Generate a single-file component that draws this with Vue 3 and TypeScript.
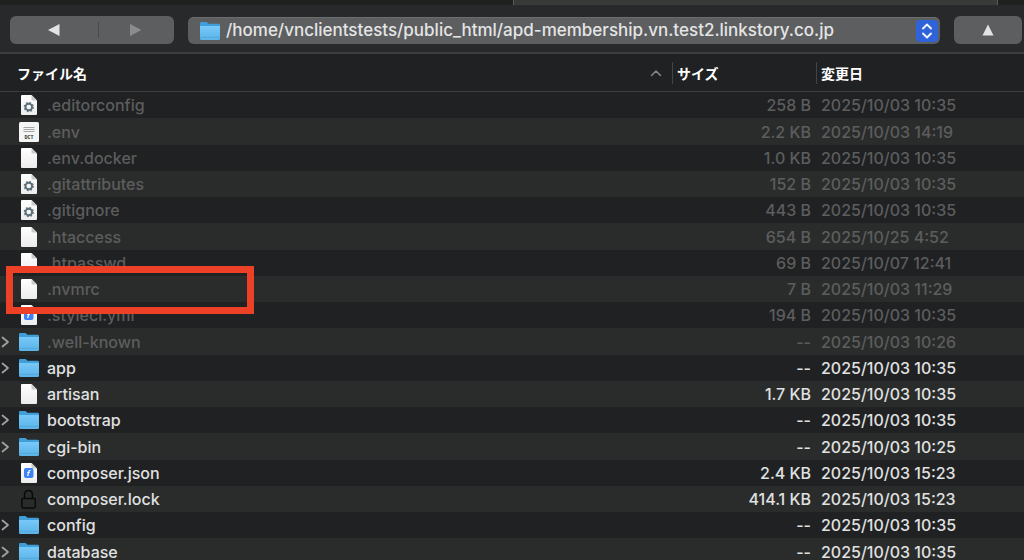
<script setup lang="ts">
import { ref } from 'vue'

type Kind = 'gear' | 'dict' | 'blank' | 'script' | 'lock' | 'folder'

interface Entry {
  name: string
  kind: Kind
  size: string
  date: string
  hidden?: boolean
  marked?: boolean
}

const path = ref('/home/vnclientstests/public_html/apd-membership.vn.test2.linkstory.co.jp')

const entries: Entry[] = [
  { name: '.editorconfig', kind: 'gear', size: '258 B', date: '2025/10/03 10:35', hidden: true },
  { name: '.env', kind: 'dict', size: '2.2 KB', date: '2025/10/03 14:19', hidden: true },
  { name: '.env.docker', kind: 'blank', size: '1.0 KB', date: '2025/10/03 10:35', hidden: true },
  { name: '.gitattributes', kind: 'gear', size: '152 B', date: '2025/10/03 10:35', hidden: true },
  { name: '.gitignore', kind: 'gear', size: '443 B', date: '2025/10/03 10:35', hidden: true },
  { name: '.htaccess', kind: 'blank', size: '654 B', date: '2025/10/25 4:52', hidden: true },
  { name: '.htpasswd', kind: 'blank', size: '69 B', date: '2025/10/07 12:41', hidden: true },
  { name: '.nvmrc', kind: 'blank', size: '7 B', date: '2025/10/03 11:29', hidden: true, marked: true },
  { name: '.styleci.yml', kind: 'script', size: '194 B', date: '2025/10/03 10:35', hidden: true },
  { name: '.well-known', kind: 'folder', size: '--', date: '2025/10/03 10:26', hidden: true },
  { name: 'app', kind: 'folder', size: '--', date: '2025/10/03 10:35' },
  { name: 'artisan', kind: 'blank', size: '1.7 KB', date: '2025/10/03 10:35' },
  { name: 'bootstrap', kind: 'folder', size: '--', date: '2025/10/03 10:35' },
  { name: 'cgi-bin', kind: 'folder', size: '--', date: '2025/10/03 10:25' },
  { name: 'composer.json', kind: 'script', size: '2.4 KB', date: '2025/10/03 15:23' },
  { name: 'composer.lock', kind: 'lock', size: '414.1 KB', date: '2025/10/03 15:23' },
  { name: 'config', kind: 'folder', size: '--', date: '2025/10/03 10:35' },
  { name: 'database', kind: 'folder', size: '--', date: '2025/10/03 10:35' },
]
</script>

<template>
  <main class="browser">
    <div class="tabs"><div class="tab"></div></div>

    <header class="toolbar">
      <div class="history">
        <button type="button" class="back" aria-label="戻る">
          <svg width="12" height="12" viewBox="0 0 12 12"><path d="M0 6 11.500 0V12Z" fill="#e2e3e3" /></svg>
        </button>
        <span class="split"></span>
        <button type="button" class="forward" aria-label="進む" disabled>
          <svg width="12" height="12" viewBox="0 0 12 12"><path d="M11.500 6 0 0V12Z" fill="#8b8c8d" /></svg>
        </button>
      </div>

      <div class="location">
        <svg class="folder" width="20" height="20" viewBox="0 0 20 20">
          <path d="M0 2.200Q0 1 1.200 1H6.500L8.500 2.700H18.500Q20 2.700 20 4V10H0Z" fill="#409ed8" />
          <path d="M0 5H20V17.500Q20 19 18.500 19H1.500Q0 19 0 17.500Z" fill="url(#folder-face)" />
          <path d="M0 16.300H20" stroke="#4a9dd0" stroke-width=".6" />
        </svg>
        <select v-model="path" aria-label="パス">
          <option :value="path">{{ path }}</option>
        </select>
        <span class="stepper">
          <svg width="22" height="22" viewBox="0 0 22 22">
            <path d="M7 8.500 11 4.500 15 8.500M7 13.500 11 17.500 15 13.500" fill="none" stroke="#f0f4ff" stroke-width="1.900" stroke-linecap="round" stroke-linejoin="round" />
          </svg>
        </span>
      </div>

      <button type="button" class="up" aria-label="上の階層へ">
        <svg width="12" height="12" viewBox="0 0 12 12"><path d="M6 .5 11.500 11.500H.5Z" fill="#e2e3e3" /></svg>
      </button>
    </header>

    <table>
      <colgroup>
        <col />
        <col class="size-col" />
        <col class="date-col" />
      </colgroup>
      <thead>
        <tr>
          <th scope="col" aria-sort="ascending">
            <button type="button" class="sort">
              ファイル名
              <svg width="12" height="8" viewBox="0 0 12 8"><path d="M1.500 6.500 6 2 10.500 6.500" fill="none" stroke="#858687" stroke-width="1.500" stroke-linecap="round" stroke-linejoin="round" /></svg>
            </button>
          </th>
          <th scope="col"><button type="button" class="sort">サイズ</button></th>
          <th scope="col"><button type="button" class="sort">変更日</button></th>
        </tr>
      </thead>
      <tbody>
        <tr v-for="entry in entries" :key="entry.name" :class="{ dim: entry.hidden }">
          <td class="name-cell">
            <div class="name">
              <button v-if="entry.kind === 'folder'" type="button" class="twisty" :aria-label="entry.name + ' を開く'">
                <svg width="10" height="12" viewBox="0 0 10 12"><path d="M2.500 1.500 8 6 2.500 10.500" fill="none" stroke="#a2a3a3" stroke-width="1.700" stroke-linecap="round" stroke-linejoin="round" /></svg>
              </button>
              <span v-else class="twisty"></span>

              <svg v-if="entry.kind === 'folder'" width="20" height="20" viewBox="0 0 20 20">
                <path d="M0 2.200Q0 1 1.200 1H6.500L8.500 2.700H18.500Q20 2.700 20 4V10H0Z" fill="#409ed8" />
                <path d="M0 5H20V17.500Q20 19 18.500 19H1.500Q0 19 0 17.500Z" fill="url(#folder-face)" />
                <path d="M0 16.300H20" stroke="#4a9dd0" stroke-width=".6" />
              </svg>
              <svg v-else-if="entry.kind === 'dict'" width="20" height="20" viewBox="0 0 20 20">
                <rect x="0" y="0" width="20" height="20" rx="1.500" fill="#f5f5f5" />
                <path d="M4.500 5.500H15.500M4.500 7.500H15.500M4.500 9.500H15.500" stroke="#a6a6a6" stroke-width="1.200" />
                <text x="10" y="17" text-anchor="middle" class="badge-text">DCT</text>
              </svg>
              <svg v-else-if="entry.kind === 'lock'" width="20" height="20" viewBox="0 0 20 20">
                <path d="M5.500 10V6Q5.500 1.600 9.500 1.600T13.500 6V10" fill="none" stroke="#090a0a" stroke-width="1.500" />
                <rect x="2.800" y="9.500" width="13.500" height="9.500" rx="1.500" fill="none" stroke="#090a0a" stroke-width="1.500" />
              </svg>
              <svg v-else width="20" height="20" viewBox="0 0 20 20">
                <path d="M3 0H12.500L18 5.500V19Q18 20 17 20H3Q2 20 2 19V1Q2 0 3 0Z" fill="url(#paper)" />
                <path d="M12.500 0V4.500Q12.500 5.500 13.500 5.500H18Z" fill="#c9caca" />
                <g v-if="entry.kind === 'gear'">
                  <circle cx="9.800" cy="12" r="3.300" fill="none" stroke="#5b6f7b" stroke-width="1.900" />
                  <circle cx="9.800" cy="12" r="4.500" fill="none" stroke="#5b6f7b" stroke-width="1.300" stroke-dasharray="1.767 1.767" />
                </g>
                <g v-if="entry.kind === 'script'">
                  <rect x="5" y="5" width="9.500" height="10" rx="2" fill="#3d83f5" />
                  <path d="M8.600 13 10.200 7.500H11.500M8.300 9.500H10.800" fill="none" stroke="#fff" stroke-width="1.100" />
                </g>
              </svg>
              <span>{{ entry.name }}</span>
            </div>
            <div v-if="entry.marked" class="marker"></div>
          </td>
          <td class="size">{{ entry.size }}</td>
          <td class="date">{{ entry.date }}</td>
        </tr>
      </tbody>
    </table>

    <svg class="defs" width="0" height="0" aria-hidden="true">
      <defs>
        <linearGradient id="folder-face" x1="0" y1="0" x2="0" y2="1">
          <stop offset="0" stop-color="#77c9f8" />
          <stop offset="1" stop-color="#5bb3e8" />
        </linearGradient>
        <linearGradient id="paper" x1="0" y1="0" x2="0" y2="1">
          <stop offset="0" stop-color="#ffffff" />
          <stop offset="1" stop-color="#ececec" />
        </linearGradient>
      </defs>
    </svg>
  </main>
</template>

<style>
body {
  margin: 0;
  background: #202123;
}

html,
body {
  overflow: hidden;
}
</style>

<style scoped>
.browser {
  color: #e0e1e1;
  font-family: Inter, "Noto Sans CJK JP", sans-serif;
  font-size: 16px;
  font-weight: 500;
}

svg {
  display: block;
  flex: none;
}

button {
  padding: 0;
  border: 0;
  background: none;
  color: inherit;
  font: inherit;
}

.tabs {
  display: flex;
  height: 5px;
  padding: 0 26px 0 513px;
  background: #1f211f;
  border-bottom: 1px solid #2a2b2b;
}

.tab {
  flex: 1;
  background: #383a38;
  border: solid #5a5b5a;
  border-width: 0 1px;
}

.toolbar {
  display: flex;
  align-items: center;
  gap: 14px;
  padding: 10px 2px 8px 10px;
  background: #28292b;
  border-bottom: 2px solid #3d3e40;
}

.history,
.up {
  display: flex;
  align-items: center;
  justify-content: center;
  box-sizing: border-box;
  height: 28px;
  border-radius: 6px;
  background: #5d5e60;
}

.history {
  width: 164px;
}

.history button {
  display: flex;
  justify-content: center;
}

.back {
  flex: 7;
}

.forward {
  flex: 6;
}

.split {
  width: 1px;
  height: 16px;
  background: #48494b;
}

.up {
  width: 68px;
}

.location {
  display: flex;
  position: relative;
  flex: 1;
}

.location select {
  flex: 1;
  min-width: 0;
  height: 27px;
  padding: 0 32px 0 38px;
  border: 0;
  border-radius: 6px;
  background: #5d5e60;
  box-shadow: inset 0 1px #6c6d6e;
  color: #e4e5e5;
  font: inherit;
  font-size: 17px;
  appearance: none;
}

.folder {
  position: absolute;
  top: 4px;
  left: 12px;
}

.stepper {
  position: absolute;
  top: 3px;
  right: 2px;
  border-radius: 4px;
  background: #2f63da;
  pointer-events: none;
}

table {
  width: 100%;
  border-collapse: separate;
  border-spacing: 0;
  table-layout: fixed;
}

.size-col {
  width: 144px;
}

.date-col {
  width: 208px;
}

th {
  height: 37px;
  padding: 0;
  border-bottom: 1px solid #3d3e40;
  color: #fff;
  font-size: 14px;
  font-weight: 700;
}

.sort {
  display: flex;
  align-items: center;
  justify-content: space-between;
  box-sizing: border-box;
  width: 100%;
  height: 22px;
  padding: 0 10px 0 4px;
  border-left: 1px solid #434446;
}

th:first-child .sort {
  padding-left: 16px;
  border-color: transparent;
}

td {
  height: 26px;
  padding: 0;
  line-height: 20px;
  white-space: nowrap;
}

tbody tr:nth-child(4n + 2) td {
  height: 27px;
}

tbody tr:nth-child(even) {
  background: #2a2c2b;
}

.dim {
  color: #5c5d5d;
}

.name-cell {
  position: relative;
}

.name {
  display: flex;
  align-items: center;
}

.name > span:last-child {
  margin-left: 8px;
}

.twisty {
  flex: none;
  width: 19px;
}

.size {
  padding-right: 5px;
  text-align: right;
}

.date {
  padding-left: 5px;
}

.marker {
  position: absolute;
  z-index: 1;
  top: -10px;
  left: 6px;
  box-sizing: border-box;
  width: 248px;
  height: 48px;
  border: 7px solid #ec4126;
}

.defs {
  position: absolute;
}

.badge-text {
  fill: #333;
  font: 700 5px "Liberation Mono", monospace;
}
</style>
